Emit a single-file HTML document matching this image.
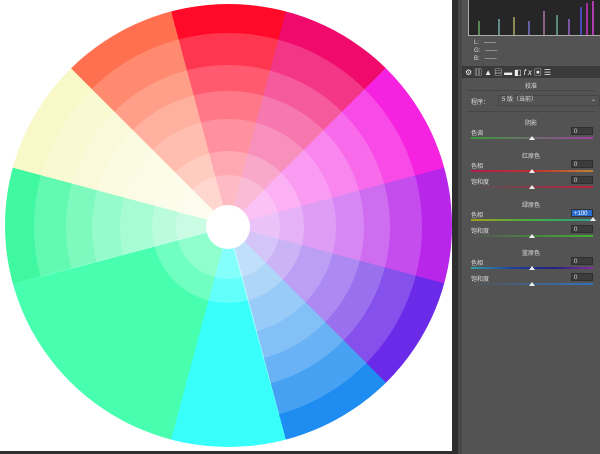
<!DOCTYPE html><html><head><meta charset="utf-8"><style>
body{margin:0;width:600px;height:454px;overflow:hidden;background:#2e2e2e;position:relative;font-family:"Liberation Sans","Noto Sans CJK SC",sans-serif}
.canvas{position:absolute;left:0;top:0;width:452px;height:451px;background:#fff;overflow:hidden}
.wheel{position:absolute;border-radius:50%}
.c{position:absolute;border-radius:50%;background:conic-gradient(rgba(255,255,255,0.18) 0 165deg,transparent 165deg 255deg,rgba(255,255,255,0.18) 255deg)}
.d{position:absolute;border-radius:50%;background:rgba(255,255,255,0.22)}
.panel{position:absolute;left:462px;top:0;width:138px;height:454px;background:#535353;color:#ddd;font-size:6px}
.strip{position:absolute;left:458px;top:0;width:4px;height:454px;background:#464646}
.hist{position:absolute;left:6px;top:-2px;width:131px;height:36px;background:#262626;border:1px solid #aaa}
.t{position:absolute;white-space:nowrap}
.box{position:absolute;left:109px;width:22px;height:8px;background:#3c3c3c;border:1px solid #2f2f2f;font-size:6px;line-height:8px;color:#ddd;padding-left:2px;box-sizing:border-box}
.sl{position:absolute;left:9px;width:122px;height:2px}
.k{position:absolute;width:0;height:0;border-left:3px solid transparent;border-right:3px solid transparent;border-bottom:4px solid #eee}
.hd{position:absolute;left:0;width:138px;text-align:center}
.sep{position:absolute;left:5px;width:128px;height:1px;background:#464646}
</style></head><body>
<div class="canvas">
<div class="wheel" style="left:5px;top:4px;width:447px;height:443px;background:conic-gradient(from -15deg,#ff0a28 0 30deg,#f00a6c 30deg 60deg,#f522e0 60deg 90deg,#b826ea 90deg 120deg,#6a2ae8 120deg 150deg,#1e8cf0 150deg 180deg,#38fffa 180deg 210deg,#48ffb0 210deg 270deg,#40f8a0 270deg 300deg,#f8f8c8 300deg 330deg,#ff7050 330deg 360deg)"></div>
<div class="c" style="left:34px;top:33px;width:388px;height:388px"></div>
<div class="c" style="left:66px;top:65px;width:324px;height:324px"></div>
<div class="c" style="left:92px;top:91px;width:272px;height:272px"></div>
<div class="c" style="left:120px;top:119px;width:216px;height:216px"></div>
<div class="d" style="left:152px;top:151px;width:152px;height:152px"></div>
<div class="d" style="left:176px;top:175px;width:104px;height:104px"></div>
<div class="d" style="left:206px;top:205px;width:44px;height:44px;background:#fff"></div>
</div>
<div class="strip"></div>
<div class="panel">
<div class="hist"><svg width="131" height="36"><g stroke-width="1.5"><line x1="10" y1="36" x2="10" y2="22" stroke="#6a6"/><line x1="30" y1="36" x2="30" y2="20" stroke="#7aa"/><line x1="45" y1="36" x2="45" y2="18" stroke="#aa6"/><line x1="60" y1="36" x2="60" y2="22" stroke="#77c"/><line x1="75" y1="36" x2="75" y2="12" stroke="#a7a"/><line x1="88" y1="36" x2="88" y2="16" stroke="#6a9"/><line x1="100" y1="36" x2="100" y2="20" stroke="#96c"/><line x1="112" y1="36" x2="112" y2="8" stroke="#55e"/><line x1="118" y1="36" x2="118" y2="4" stroke="#c3c"/><line x1="124" y1="36" x2="124" y2="2" stroke="#d4d"/></g></svg></div>
<div class="t" style="left:12px;top:40px">L:&nbsp;&nbsp;&nbsp;——</div>
<div class="t" style="left:12px;top:48px">G:&nbsp;&nbsp;&nbsp;——</div>
<div class="t" style="left:12px;top:56px">B:&nbsp;&nbsp;&nbsp;——</div>
<div style="position:absolute;left:0;top:66px;width:138px;height:12px;background:#3a3a3a"></div>
<div class="t" style="left:3px;top:67px;font-size:8px;color:#eee;letter-spacing:2px">⚙▥▲▤▬◧<i>fx</i>▣☰</div>
<div class="hd" style="top:81px">校准</div>
<div class="sep" style="top:90px"></div>
<div class="t" style="left:9px;top:97px">程序：</div>
<div style="position:absolute;left:36px;top:95px;width:97px;height:9px;border:1px solid #464646;font-size:6px;line-height:9px;padding-left:3px">5 版（当前）<span style="float:right;margin-right:3px">⌄</span></div>
<div class="sep" style="top:111px"></div>
<div class="hd" style="top:118px">阴影</div>
<div class="t" style="left:9px;top:128px">色调</div><div class="box" style="top:127px">0</div>
<div class="sl" style="top:137px;background:linear-gradient(90deg,#3a9a3a,#a040a0)"></div><div class="k" style="left:67px;top:136px"></div>
<div class="hd" style="top:151px">红原色</div>
<div class="t" style="left:9px;top:161px">色相</div><div class="box" style="top:160px">0</div>
<div class="sl" style="top:170px;background:linear-gradient(90deg,#b02050,#c03030,#c08030)"></div><div class="k" style="left:67px;top:169px"></div>
<div class="t" style="left:9px;top:177px">饱和度</div><div class="box" style="top:176px">0</div>
<div class="sl" style="top:186px;background:linear-gradient(90deg,#555,#c02040)"></div><div class="k" style="left:67px;top:185px"></div>
<div class="hd" style="top:200px">绿原色</div>
<div class="t" style="left:9px;top:210px">色相</div><div class="box" style="top:209px;background:#2a6fd0;color:#fff">+100</div>
<div class="sl" style="top:219px;background:linear-gradient(90deg,#a0a020,#40b040,#30a090)"></div><div class="k" style="left:128px;top:217px"></div>
<div class="t" style="left:9px;top:226px">饱和度</div><div class="box" style="top:225px">0</div>
<div class="sl" style="top:235px;background:linear-gradient(90deg,#555,#40b030)"></div><div class="k" style="left:67px;top:234px"></div>
<div class="hd" style="top:248px">蓝原色</div>
<div class="t" style="left:9px;top:258px">色相</div><div class="box" style="top:257px">0</div>
<div class="sl" style="top:267px;background:linear-gradient(90deg,#30a0a0,#2040a0,#202080,#8030a0)"></div><div class="k" style="left:67px;top:266px"></div>
<div class="t" style="left:9px;top:274px">饱和度</div><div class="box" style="top:273px">0</div>
<div class="sl" style="top:283px;background:linear-gradient(90deg,#555,#3070c0)"></div><div class="k" style="left:67px;top:282px"></div>
</div>
</body></html>
